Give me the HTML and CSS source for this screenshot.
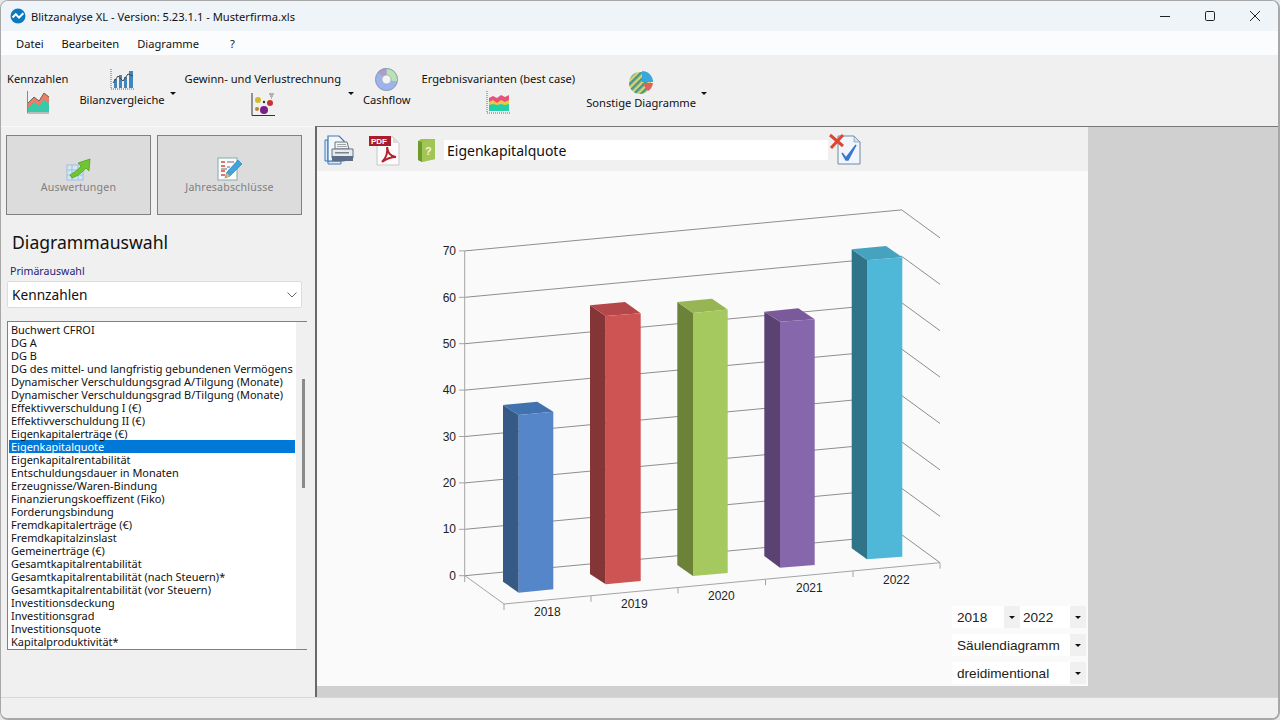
FILE: index.html
```html
<!DOCTYPE html>
<html lang="de">
<head>
<meta charset="utf-8">
<title>Blitzanalyse XL</title>
<link rel="stylesheet" href="styles.css">
</head>
<body>
<div class="window">
  <header class="titlebar">
    <svg class="app-icon" width="16" height="16" viewBox="0 0 16 16"><circle cx="8" cy="8" r="7.5" fill="#0b78c2"/><path d="M2.5 9.5 L5.8 6.2 L9 9.6 L13.3 5.2" fill="none" stroke="#fff" stroke-width="2"/></svg>
    <span class="title-text">Blitzanalyse XL - Version: 5.23.1.1 - Musterfirma.xls</span>
    <div class="win-controls">
      <svg width="12" height="12" viewBox="0 0 12 12"><path d="M1 6.5H11" stroke="#222" stroke-width="1"/></svg>
      <svg width="12" height="12" viewBox="0 0 12 12"><rect x="1.5" y="1.5" width="9" height="9" rx="1.2" fill="none" stroke="#222"/></svg>
      <svg width="12" height="12" viewBox="0 0 12 12"><path d="M1 1L11 11M11 1L1 11" stroke="#222" stroke-width="1"/></svg>
    </div>
  </header>
  <nav class="menubar">
    <span class="menu-datei">Datei</span>
    <span class="menu-bearb">Bearbeiten</span>
    <span class="menu-diag">Diagramme</span>
    <span class="menu-help">?</span>
  </nav>
  <div class="toolbar">
    <div class="tool tool-kenn">
      <span>Kennzahlen</span>
      <svg width="24" height="24" viewBox="0 0 24 24"><path d="M1.5 1V23H23" fill="none" stroke="#888"/><path d="M2 20L2 13L8 7L13 11L18 3L23 7V22H2Z" fill="#38c9a8"/><path d="M2 13L8 7L13 11L18 3L23 7V13L18 10L13 16L8 12L2 18Z" fill="#ee7c66"/><path d="M2 13L8 7L13 11L18 3L23 7" fill="none" stroke="#555" stroke-width=".8"/></svg>
    </div>
    <div class="tool tool-bilanz">
      <svg width="24" height="21" viewBox="0 0 24 21"><path d="M1 0V20H24" fill="none" stroke="#666" stroke-dasharray="1 1"/><g fill="#3e86bd"><rect x="4" y="10" width="3" height="9"/><rect x="9" y="6" width="3" height="13"/><rect x="14" y="8" width="3" height="11"/><rect x="19" y="2" width="4" height="17"/></g><path d="M3 14L8 7L13 12L18 5L23 7" fill="none" stroke="#444" stroke-width="1"/></svg>
      <span>Bilanzvergleiche</span>
    </div>
    <span class="caret caret-1"></span>
    <div class="tool tool-guv">
      <span>Gewinn- und Verlustrechnung</span>
      <svg width="24" height="25" viewBox="0 0 24 25"><path d="M1 1V23.500H24" fill="none" stroke="#333"/><circle cx="7" cy="8" r="3" fill="#d4b92c"/><circle cx="19" cy="11" r="3" fill="#c8352e"/><circle cx="13" cy="18" r="4" fill="#7a1f8a"/><circle cx="6" cy="17" r="2" fill="#b8862c"/><circle cx="13" cy="10" r="1.200" fill="#333"/><path d="M18 2H23M19 4H22M20 6H21" stroke="#777"/></svg>
    </div>
    <span class="caret caret-2"></span>
    <div class="tool tool-cash">
      <svg width="23" height="23" viewBox="0 0 23 23"><circle cx="11.500" cy="11.500" r="8" fill="none" stroke="#9db3ec" stroke-width="6.500"/><path d="M11.500 3.500A8 8 0 0 1 19.300 13" fill="none" stroke="#b9e3b0" stroke-width="6.500"/><path d="M5 6.500A8 8 0 0 1 11.500 3.500" fill="none" stroke="#a99fc8" stroke-width="6.500"/><circle cx="11.500" cy="11.500" r="11" fill="none" stroke="#8a8fa8" stroke-width=".8"/><circle cx="11.500" cy="11.500" r="4.500" fill="#f4f4f4" stroke="#8a8fa8" stroke-width=".6"/></svg>
      <span>Cashflow</span>
    </div>
    <div class="tool tool-erg">
      <span>Ergebnisvarianten (best case)</span>
      <svg width="24" height="24" viewBox="0 0 24 24"><path d="M1 1V23H24" fill="none" stroke="#667" stroke-dasharray="1 1"/><path d="M3 8L7 6L11 8L15 5L19 7L23 5V21H3Z" fill="#e8507e"/><path d="M3 12L7 10L11 13L15 10L19 12L23 10V21H3Z" fill="#f0c840"/><path d="M3 15L7 14L11 15L15 14L19 15L23 14V21H3Z" fill="#22d0a8"/></svg>
    </div>
    <div class="tool tool-sonst">
      <svg width="26" height="25" viewBox="0 0 26 25"><defs><pattern id="hatch" width="5" height="5" patternUnits="userSpaceOnUse" patternTransform="rotate(45)"><rect width="5" height="5" fill="#e0d070"/><rect width="2.500" height="5" fill="#3f9b8f"/></pattern></defs><circle cx="12" cy="13" r="11" fill="url(#hatch)"/><path d="M14 1A11 11 0 0 1 25 12H14Z" fill="#38a8dc"/><path d="M14 13H25A11 11 0 0 1 20 21Z" fill="#e0605c"/></svg>
      <span>Sonstige Diagramme</span>
    </div>
    <span class="caret caret-3"></span>
  </div>
  <main class="workspace">
    <aside class="sidebar">
      <div class="action-row">
        <div class="action-btn">
          <svg width="26" height="24" viewBox="0 0 26 24"><rect x="1" y="8" width="16" height="15" fill="#d4e6f6" stroke="#9cc0e0"/><path d="M6 8V23M12 8V23M1 13H17M1 18H17" stroke="#9cc0e0"/><path d="M4 18C8 15 11 14 15 9L12 6L24 2L23 14L20 11C16 16 10 20 6 21Z" fill="#6fc62e" stroke="#4a9a20" stroke-width=".7"/></svg>
          <span>Auswertungen</span>
        </div>
        <div class="action-btn">
          <svg width="26" height="24" viewBox="0 0 26 24"><rect x="1" y="1" width="19" height="22" fill="#fbfbfb" stroke="#8aa"/><path d="M4 5H8M4 9H8M4 14H8M4 18H8" stroke="#d24a3c" stroke-width="1.500"/><path d="M10 5H17M10 10H13M4 12H10" stroke="#667" stroke-width="1"/><path d="M8 21L10 15L21 3L25 7L13 19Z" fill="#3fa4dc" stroke="#2a7cb0" stroke-width=".6"/><path d="M8 21L10 16L13 19Z" fill="#e8b060"/></svg>
          <span>Jahresabschlüsse</span>
        </div>
      </div>
      <h1 class="panel-title">Diagrammauswahl</h1>
      <label class="field-label">Primärauswahl</label>
      <div class="select-box">
        <span>Kennzahlen</span>
        <svg width="10" height="6" viewBox="0 0 10 6"><path d="M.5 .5L5 5L9.500 .5" fill="none" stroke="#666"/></svg>
      </div>
      <div class="listbox">
        <ul class="list">
          <li>Buchwert CFROI</li>
          <li>DG A</li>
          <li>DG B</li>
          <li>DG des mittel- und langfristig gebundenen Vermögens</li>
          <li>Dynamischer Verschuldungsgrad A/Tilgung (Monate)</li>
          <li>Dynamischer Verschuldungsgrad B/Tilgung (Monate)</li>
          <li>Effektivverschuldung I (€)</li>
          <li>Effektivverschuldung II (€)</li>
          <li>Eigenkapitalerträge (€)</li>
          <li class="selected">Eigenkapitalquote</li>
          <li>Eigenkapitalrentabilität</li>
          <li>Entschuldungsdauer in Monaten</li>
          <li>Erzeugnisse/Waren-Bindung</li>
          <li>Finanzierungskoeffizent (Fiko)</li>
          <li>Forderungsbindung</li>
          <li>Fremdkapitalerträge (€)</li>
          <li>Fremdkapitalzinslast</li>
          <li>Gemeinerträge (€)</li>
          <li>Gesamtkapitalrentabilität</li>
          <li>Gesamtkapitalrentabilität (nach Steuern)*</li>
          <li>Gesamtkapitalrentabilität (vor Steuern)</li>
          <li>Investitionsdeckung</li>
          <li>Investitionsgrad</li>
          <li>Investitionsquote</li>
          <li>Kapitalproduktivität*</li>
        </ul>
        <div class="scrollbar"><div class="thumb"></div></div>
      </div>
    </aside>
    <section class="content">
      <div class="report">
        <div class="report-bar">
          <svg class="ic-print" width="31" height="32" viewBox="0 0 31 32"><path d="M2 6H5V30H18V27H2Z" fill="#dbe9f7" stroke="#3f78b8"/><path d="M5 2H16L21 7V27H5Z" fill="#f2f7fc" stroke="#3f78b8" stroke-width="1.200"/><path d="M12 8H24L26 15H12Z" fill="#f4f4f4" stroke="#6b7480"/><path d="M14 10.500H23M14 12.500H24" stroke="#8a929c" stroke-width=".8"/><path d="M9 15H30V24H9Z" fill="#e6eaee" stroke="#66707c"/><path d="M9 22H30V27H9Z" fill="#5a6e88"/><rect x="12" y="18" width="14" height="1.500" fill="#7a8490"/></svg>
          <svg class="ic-pdf" width="32" height="30" viewBox="0 0 32 30"><path d="M9 1H25L31 7V29H9Z" fill="#fbfbfb" stroke="#c8c8c8"/><path d="M25 1V7H31Z" fill="#ddd"/><rect x="1" y="0" width="22" height="10" fill="#a81c2b"/><text x="3" y="8" class="pdf-text">PDF</text><path d="M14 26C18 22 20 17 19 11C20 17 22 20 28 21C22 21 18 23 14 26Z" fill="none" stroke="#b5202e" stroke-width="2"/></svg>
          <svg class="ic-book" width="19" height="25" viewBox="0 0 19 25"><path d="M1 3L4 1H18V21L5 24L1 22Z" fill="#9cc24c"/><path d="M1 3L5 4V24L1 22Z" fill="#6f9a2e"/><path d="M5 4L18 1V21L5 24Z" fill="#a2c655"/><text x="8" y="17" class="book-text">?</text></svg>
          <div class="name-field">Eigenkapitalquote</div>
          <svg class="ic-check" width="34" height="33" viewBox="0 0 34 33"><path d="M10 3H26L32 9V31H10Z" fill="#f2f6fa" stroke="#6d8aa8"/><path d="M26 3V9H32Z" fill="#d5dde5" stroke="#6d8aa8" stroke-width=".6"/><path d="M14 20L18 25L28 12L20 27H18Z" fill="#3a78d0" stroke="#3a78d0" stroke-width="1.500"/><path d="M2 2L15 13M15 2L3 15" stroke="#dc4632" stroke-width="3"/></svg>
        </div>
        <div class="chart-area">
          <svg class="chart" width="771" height="515" viewBox="317 171 771 515">
            <g class="grid">
              <path d="M465 575.700L901.700 534.700L940 562.700M465 529.300L901.700 488.300L940 516.300M465 482.900L901.700 441.900L940 469.900M465 436.500L901.700 395.500L940 423.500M465 390.100L901.700 349.100L940 377.100M465 343.700L901.700 302.700L940 330.700M465 297.300L901.700 256.300L940 284.300M465 250.900L901.700 209.900L940 237.900"/>
            </g>
            <g class="axis">
              <path d="M464.700 251V582M459 250.900H465M459 297.300H465M459 343.700H465M459 390.100H465M459 436.500H465M459 482.900H465M459 529.300H465M459 575.700H465"/>
              <path d="M465 575.700L504 604L940 562.700M504 604V610M591 595.800V601.800M678 587.500V593.500M765.500 579.200V585.200M853 571V577M940 562.700V568.700"/>
            </g>
            <g class="y-labels">
              <text x="456" y="255">70</text><text x="456" y="302">60</text><text x="456" y="348">50</text><text x="456" y="394">40</text><text x="456" y="441">30</text><text x="456" y="487">20</text><text x="456" y="533">10</text><text x="456" y="580">0</text>
            </g>
            <g class="x-labels">
              <text x="534" y="616">2018</text><text x="621" y="608">2019</text><text x="708" y="600">2020</text><text x="796" y="592">2021</text><text x="883" y="584">2022</text>
            </g>
            <polygon fill="#355a85" points="503,405 518.700,415 518.700,592.700 503,581.700"/>
            <polygon fill="#4072b0" points="503,405 537.300,401.700 553.300,411.700 518.700,415"/>
            <polygon fill="#5486c9" points="518.700,415 553.300,411.700 553.300,589.300 518.700,592.700"/>
            <polygon fill="#843535" points="590,305.300 605.700,316 605.700,584.300 590,574"/>
            <polygon fill="#b5464a" points="590,305.300 625,302 640.700,313.300 605.700,316"/>
            <polygon fill="#cd5452" points="605.700,316 640.700,313.300 640.700,581 605.700,584.300"/>
            <polygon fill="#6c8239" points="677.300,302 693,313 693,576 677.300,565"/>
            <polygon fill="#97b552" points="677.300,302 712,298.700 727.700,309.500 693,313"/>
            <polygon fill="#a5c95e" points="693,313 727.700,309.500 727.700,573 693,576"/>
            <polygon fill="#5a4272" points="764.300,311.700 780,321.700 780,567.700 764.300,556"/>
            <polygon fill="#7a5a9a" points="764.300,311.700 798.300,308.300 814.700,319.300 780,321.700"/>
            <polygon fill="#8767ab" points="780,321.700 814.700,319.300 814.700,565 780,567.700"/>
            <polygon fill="#2f7488" points="851.700,249.300 867,260 867,559.300 851.700,548.300"/>
            <polygon fill="#45a3c0" points="851.700,249.300 886,246 902.300,257.300 867,260"/>
            <polygon fill="#4fb8d8" points="867,260 902.300,257.300 902.300,556.700 867,559.300"/>
          </svg>
          <div class="chart-controls">
            <div class="ctrl-row">
              <div class="combo combo-short"><span>2018</span><i class="combo-btn"><b class="caret-small"></b></i></div>
              <div class="combo combo-fill"><span>2022</span><i class="combo-btn"><b class="caret-small"></b></i></div>
            </div>
            <div class="ctrl-row"><div class="combo combo-fill"><span>Säulendiagramm</span><i class="combo-btn"><b class="caret-small"></b></i></div></div>
            <div class="ctrl-row"><div class="combo combo-fill"><span>dreidimentional</span><i class="combo-btn"><b class="caret-small"></b></i></div></div>
          </div>
        </div>
      </div>
    </section>
  </main>
  <footer class="statusbar"></footer>
</div>
</body>
</html>
```
FILE: styles.css
```css
* { box-sizing: border-box; }
html, body { margin: 0; padding: 0; width: 1280px; height: 720px; overflow: hidden; background: #e4e8ec; }
body { font-family: "Noto Sans", "Open Sans", sans-serif; font-size: 11.150px; color: #111; }

.window {
  width: 1280px; height: 720px;
  display: flex; flex-direction: column;
  background: #f0f0f0;
  border: 1px solid #a8a8a8;
  border-width: 1px 2px 2px 1px;
  border-radius: 8px;
  overflow: hidden;
}

.titlebar { height: 30px; flex: none; display: flex; align-items: center; background: #eff4f9; padding-left: 9px; }
.app-icon { flex: none; }
.title-text { margin-left: 5px; white-space: nowrap; }
.win-controls { margin-left: auto; display: flex; gap: 33px; padding-right: 17px; }

.menubar { height: 24px; flex: none; display: flex; align-items: center; background: #fbfcfd; padding-left: 15px; }
.menu-bearb { margin-left: 18px; }
.menu-diag { margin-left: 18px; }
.menu-help { margin-left: 31px; }

.toolbar { height: 71px; flex: none; display: flex; align-items: flex-start; background: #f0f0f0; line-height: 16px; }
.tool { display: flex; flex-direction: column; align-items: center; white-space: nowrap; flex: none; }
.tool svg { display: block; flex: none; }
.tool-kenn { margin: 16px 0 0 6px; gap: 3px; }
.tool-bilanz { margin: 14px 0 0 11px; gap: 2px; }
.tool-guv { margin: 16px 0 0 9px; gap: 5px; }
.tool-cash { margin: 13px 0 0 9px; gap: 1px; }
.tool-erg { margin: 16px 0 0 11px; gap: 3px; }
.tool-sonst { margin: 15px 0 0 11px; gap: 0; }
.caret { flex: none; width: 0; height: 0; border: 3px solid transparent; border-top: 3px solid #111; border-bottom: 0; margin-top: 37px; margin-left: 5px; }
.caret-2 { margin-left: 7px; }

.workspace { flex: 1; min-height: 0; display: flex; }
.sidebar { width: 314px; flex: none; padding: 8px 0 0 5px; background: #f0f0f0; border-top: 1px solid #fafafa; }
.action-row { display: flex; gap: 6px; }
.action-btn {
  width: 145px; height: 80px;
  display: flex; flex-direction: column; align-items: center; justify-content: flex-start;
  padding-top: 21px;
  background: #dcdcdc; border: 1px solid #808080; color: #808080;
  font-size: 10.600px; line-height: 13px; letter-spacing: .2px;
}
.action-btn svg { display: block; }

.panel-title { margin: 14px 0 0 6px; font-size: 17.600px; line-height: 26px; font-weight: 400; color: #111; }
.field-label { display: block; margin: 9px 0 0 4px; font-size: 10.600px; line-height: 14px; color: #22227a; }
.select-box {
  margin: 3px 0 0 1px; width: 295px; height: 27px;
  display: flex; align-items: center; justify-content: space-between;
  padding: 0 4px 0 4px; background: #fff;
  border: 1px solid #dcdcdc; border-radius: 2px; font-size: 13.700px;
}
.listbox {
  margin: 13px 0 0 1px; width: 300px; height: 329px;
  display: flex; background: #fff;
  border-top: 1px solid #808080; border-left: 1px solid #808080; border-bottom: 1px solid #808080;
}
.list { list-style: none; margin: 0; padding: 1px 0 0 0; flex: 1; min-width: 0; }
.list li { height: 13px; line-height: 13px; font-size: 10.950px; padding-left: 3px; white-space: nowrap; }
.list li.selected { background: #0078d7; color: #fff; margin: 0 1px 0 1px; padding-left: 2px; }
.scrollbar { width: 11px; flex: none; background: #f0f0f0; padding: 57px 2px 0 6px; }
.thumb { width: 3px; height: 109px; background: #8a8a8a; }

.content { flex: 1; min-width: 0; display: flex; background: #d0d0d0; border-left: 2px solid #696969; border-top: 1px solid #777; }
.report { width: 771px; flex: none; align-self: flex-start; background: #fafafa; }
.report-bar { height: 44px; display: flex; align-items: flex-start; background: #f0f0f0; }
.report-bar svg { flex: none; display: block; }
.ic-print { margin: 7px 0 0 6px; }
.ic-pdf { margin: 9px 0 0 14px; }
.ic-book { margin: 11px 0 0 17px; }
.name-field { margin: 13px 0 0 8px; width: 384px; height: 20px; line-height: 21px; background: #fff; font-size: 14px; padding-left: 3px; }
.ic-check { margin: 6px 0 0 0; }
.pdf-text { font-family: "Liberation Sans", sans-serif; font-weight: 700; font-size: 8px; fill: #fff; }
.book-text { font-family: "Liberation Sans", sans-serif; font-weight: 700; font-size: 11px; fill: #eef5d8; }

.chart-area { position: relative; height: 515px; background: #fafafa; }
.chart { display: block; }
.grid path { fill: none; stroke: #8e8e8e; stroke-width: 1; }
.axis path { fill: none; stroke: #a4a4a4; stroke-width: 1; }
.y-labels text { text-anchor: end; }
.y-labels text, .x-labels text { font-family: "Liberation Sans", Arial, sans-serif; font-size: 12px; fill: #222; }

.chart-controls { position: absolute; right: 2px; bottom: 2px; width: 134px; display: flex; flex-direction: column; gap: 6px; }
.ctrl-row { display: flex; height: 22px; }
.combo { display: flex; align-items: center; justify-content: space-between; background: #fff; font-family: "Liberation Sans", Arial, sans-serif; font-size: 13.600px; color: #222; padding-left: 5px; }
.combo-short { width: 68px; flex: none; }
.combo-fill { flex: 1; padding-left: 3px; }
.ctrl-row:not(:first-child) .combo-fill { padding-left: 5px; }
.combo-btn { width: 16px; height: 22px; flex: none; display: flex; align-items: center; justify-content: center; background: #f0f0f0; }
.caret-small { width: 0; height: 0; border: 3px solid transparent; border-top: 3px solid #111; border-bottom: 0; }

.statusbar { height: 21px; flex: none; background: #f0f0f0; border-top: 1px solid #d8d8d8; }
```
